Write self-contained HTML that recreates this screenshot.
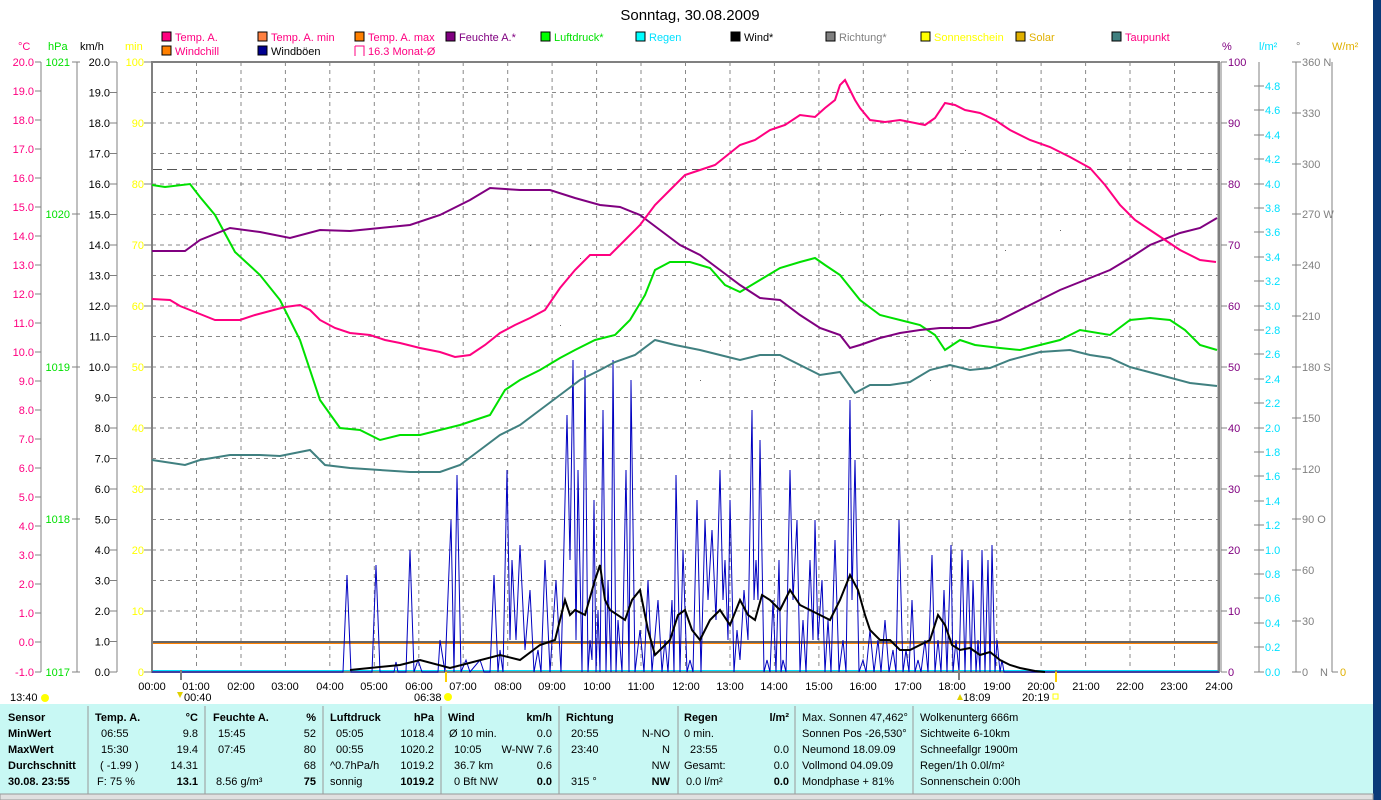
<!DOCTYPE html>
<html><head><meta charset="utf-8"><style>
html,body{margin:0;padding:0;background:#fff;overflow:hidden}
svg{display:block;font-family:"Liberation Sans",sans-serif}
</style></head><body>
<svg width="1381" height="800" viewBox="0 0 1381 800" xmlns="http://www.w3.org/2000/svg">
<rect x="0" y="0" width="1381" height="800" fill="#fff"/>
<rect x="1373" y="0" width="8" height="800" fill="#0a3a78"/>
<text x="690" y="20" font-size="15" text-anchor="middle" fill="#000">Sonntag, 30.08.2009</text>

<g font-size="11">
<rect x="162" y="32" width="9" height="9" fill="#ff0080" stroke="#000"/><text x="175" y="41" fill="#ff0080">Temp. A.</text>
<rect x="258" y="32" width="9" height="9" fill="#ff8040" stroke="#000"/><text x="271" y="41" fill="#ff0080">Temp. A. min</text>
<rect x="355" y="32" width="9" height="9" fill="#ff8000" stroke="#000"/><text x="368" y="41" fill="#ff0080">Temp. A. max</text>
<rect x="446" y="32" width="9" height="9" fill="#800080" stroke="#000"/><text x="459" y="41" fill="#800080">Feuchte A.*</text>
<rect x="541" y="32" width="9" height="9" fill="#00ff00" stroke="#000"/><text x="554" y="41" fill="#00e000">Luftdruck*</text>
<rect x="636" y="32" width="9" height="9" fill="#00ffff" stroke="#000"/><text x="649" y="41" fill="#00e0ff">Regen</text>
<rect x="731" y="32" width="9" height="9" fill="#000" stroke="#000"/><text x="744" y="41" fill="#000">Wind*</text>
<rect x="826" y="32" width="9" height="9" fill="#808080" stroke="#000"/><text x="839" y="41" fill="#808080">Richtung*</text>
<rect x="921" y="32" width="9" height="9" fill="#ffff00" stroke="#000"/><text x="934" y="41" fill="#ffff00">Sonnenschein</text>
<rect x="1016" y="32" width="9" height="9" fill="#e0b000" stroke="#000"/><text x="1029" y="41" fill="#e0b000">Solar</text>
<rect x="1112" y="32" width="9" height="9" fill="#408080" stroke="#000"/><text x="1125" y="41" fill="#ff0080">Taupunkt</text>
<rect x="162" y="46" width="9" height="9" fill="#ff8000" stroke="#000"/><text x="175" y="55" fill="#ff0080">Windchill</text>
<rect x="258" y="46" width="9" height="9" fill="#000090" stroke="#000"/><text x="271" y="55" fill="#000">Windböen</text>
<path d="M355 46h9v10M355 46v10" fill="none" stroke="#ff0080"/><text x="368" y="55" fill="#ff0080">16.3 Monat-Ø</text>
</g>

<g font-size="11">
<text x="18" y="50" fill="#ff0080">°C</text>
<text x="48" y="50" fill="#00e000">hPa</text>
<text x="80" y="50" fill="#000">km/h</text>
<text x="125" y="50" fill="#ffff00">min</text>
<text x="1222" y="50" fill="#800080">%</text>
<text x="1259" y="50" fill="#00e0ff">l/m²</text>
<text x="1296" y="50" fill="#808080">°</text>
<text x="1332" y="50" fill="#e0b000">W/m²</text>
</g>

<g stroke="#888" stroke-dasharray="4,4" stroke-width="1">
<path d="M152 92.5H1219M152 123H1219M152 153.5H1219M152 184H1219M152 214.5H1219M152 245H1219M152 275.5H1219M152 306H1219M152 336.5H1219M152 367H1219M152 397.5H1219M152 428H1219M152 458.5H1219M152 489H1219M152 519.5H1219M152 550H1219M152 580.5H1219M152 611H1219"/>
<path d="M196.5 62V672M241 62V672M285.4 62V672M329.8 62V672M374.3 62V672M418.8 62V672M463.2 62V672M507.7 62V672M552.1 62V672M596.6 62V672M641 62V672M685.5 62V672M730 62V672M774.4 62V672M818.9 62V672M863.3 62V672M907.8 62V672M952.2 62V672M996.7 62V672M1041.1 62V672M1085.6 62V672M1130 62V672M1174.5 62V672"/>
</g>
<path d="M152 169.5H1219" stroke="#555" stroke-dasharray="10,5"/>
<path d="M152 642H1219" stroke="#666" stroke-width="2"/>
<path d="M152 643.5H1219" stroke="#ff8000" stroke-width="1"/>
<path d="M152 671H1219" stroke="#00e0ff" stroke-width="2"/>
<rect x="152" y="62" width="1067" height="610" fill="none" stroke="#808080" stroke-width="2"/>
<path d="M1218 62V672M1221 62V672" stroke="#808080"/>

<g stroke="#808080" fill="none">
<path d="M41 62V672M77 62V672M117 62V672"/>
</g>
<g font-size="11" fill="#ff0080" text-anchor="end">
<text x="34" y="66">20.0</text><text x="34" y="95">19.0</text><text x="34" y="124">18.0</text><text x="34" y="153">17.0</text><text x="34" y="182">16.0</text><text x="34" y="211">15.0</text><text x="34" y="240">14.0</text><text x="34" y="269">13.0</text><text x="34" y="298">12.0</text><text x="34" y="327">11.0</text><text x="34" y="356">10.0</text><text x="34" y="385">9.0</text><text x="34" y="414">8.0</text><text x="34" y="443">7.0</text><text x="34" y="472">6.0</text><text x="34" y="501">5.0</text><text x="34" y="530">4.0</text><text x="34" y="559">3.0</text><text x="34" y="588">2.0</text><text x="34" y="617">1.0</text><text x="34" y="646">0.0</text><text x="34" y="676">-1.0</text>
</g>
<path d="M35 62h6M35 91h6M35 120h6M35 149h6M35 178h6M35 207h6M35 236h6M35 265h6M35 294h6M35 323h6M35 352h6M35 381h6M35 410h6M35 439h6M35 468h6M35 497h6M35 526h6M35 555h6M35 584h6M35 613h6M35 642h6M35 672h6" stroke="#808080"/>
<g font-size="11" fill="#00e000" text-anchor="end">
<text x="70" y="66">1021</text><text x="70" y="218">1020</text><text x="70" y="371">1019</text><text x="70" y="523">1018</text><text x="70" y="676">1017</text>
</g>
<path d="M72 62h8M72 214h8M72 367h8M72 519h8M72 672h8" stroke="#808080"/>
<g font-size="11" fill="#000" text-anchor="end">
<text x="110" y="66">20.0</text><text x="110" y="96.5">19.0</text><text x="110" y="127">18.0</text><text x="110" y="157.5">17.0</text><text x="110" y="188">16.0</text><text x="110" y="218.5">15.0</text><text x="110" y="249">14.0</text><text x="110" y="279.5">13.0</text><text x="110" y="310">12.0</text><text x="110" y="340.5">11.0</text><text x="110" y="371">10.0</text><text x="110" y="401.5">9.0</text><text x="110" y="432">8.0</text><text x="110" y="462.5">7.0</text><text x="110" y="493">6.0</text><text x="110" y="523.5">5.0</text><text x="110" y="554">4.0</text><text x="110" y="584.5">3.0</text><text x="110" y="615">2.0</text><text x="110" y="645.5">1.0</text><text x="110" y="676">0.0</text>
</g>
<path d="M110 62h7M110 92.5h7M110 123h7M110 153.5h7M110 184h7M110 214.5h7M110 245h7M110 275.5h7M110 306h7M110 336.5h7M110 367h7M110 397.5h7M110 428h7M110 458.5h7M110 489h7M110 519.5h7M110 550h7M110 580.5h7M110 611h7M110 641.5h7M110 672h7" stroke="#808080"/>
<g font-size="11" fill="#ffff00" text-anchor="end">
<text x="144" y="66">100</text><text x="144" y="127">90</text><text x="144" y="188">80</text><text x="144" y="249">70</text><text x="144" y="310">60</text><text x="144" y="371">50</text><text x="144" y="432">40</text><text x="144" y="493">30</text><text x="144" y="554">20</text><text x="144" y="615">10</text><text x="144" y="676">0</text>
</g>
<path d="M144 62h8M144 123h8M144 184h8M144 245h8M144 306h8M144 367h8M144 428h8M144 489h8M144 550h8M144 611h8M144 672h8" stroke="#808080"/>

<path d="M1221 62h6M1221 123h6M1221 184h6M1221 245h6M1221 306h6M1221 367h6M1221 428h6M1221 489h6M1221 550h6M1221 611h6M1221 672h6" stroke="#808080"/>
<g font-size="11" fill="#800080">
<text x="1228" y="66">100</text><text x="1228" y="127">90</text><text x="1228" y="188">80</text><text x="1228" y="249">70</text><text x="1228" y="310">60</text><text x="1228" y="371">50</text><text x="1228" y="432">40</text><text x="1228" y="493">30</text><text x="1228" y="554">20</text><text x="1228" y="615">10</text><text x="1228" y="676">0</text>
</g>
<path d="M1259 62V672M1296 62V672M1332 62V672" stroke="#808080"/>
<g stroke="#808080">
<path d="M1254 86h5M1254 110h5M1254 135h5M1254 159h5M1254 184h5M1254 208h5M1254 232h5M1254 257h5M1254 281h5M1254 306h5M1254 330h5M1254 354h5M1254 379h5M1254 403h5M1254 428h5M1254 452h5M1254 476h5M1254 501h5M1254 525h5M1254 550h5M1254 574h5M1254 598h5M1254 623h5M1254 647h5M1254 672h5"/>
<path d="M1259 86h5M1259 110h5M1259 135h5M1259 159h5M1259 184h5M1259 208h5M1259 232h5M1259 257h5M1259 281h5M1259 306h5M1259 330h5M1259 354h5M1259 379h5M1259 403h5M1259 428h5M1259 452h5M1259 476h5M1259 501h5M1259 525h5M1259 550h5M1259 574h5M1259 598h5M1259 623h5M1259 647h5M1259 672h5"/>
<path d="M1292 62h9M1292 113h9M1292 164h9M1292 214h9M1292 265h9M1292 316h9M1292 367h9M1292 418h9M1292 469h9M1292 519h9M1292 570h9M1292 621h9M1292 672h9M1332 672h6"/>
</g>
<g font-size="11" fill="#00e0ff">
<text x="1265" y="90">4.8</text><text x="1265" y="114">4.6</text><text x="1265" y="139">4.4</text><text x="1265" y="163">4.2</text><text x="1265" y="188">4.0</text><text x="1265" y="212">3.8</text><text x="1265" y="236">3.6</text><text x="1265" y="261">3.4</text><text x="1265" y="285">3.2</text><text x="1265" y="310">3.0</text><text x="1265" y="334">2.8</text><text x="1265" y="358">2.6</text><text x="1265" y="383">2.4</text><text x="1265" y="407">2.2</text><text x="1265" y="432">2.0</text><text x="1265" y="456">1.8</text><text x="1265" y="480">1.6</text><text x="1265" y="505">1.4</text><text x="1265" y="529">1.2</text><text x="1265" y="554">1.0</text><text x="1265" y="578">0.8</text><text x="1265" y="602">0.6</text><text x="1265" y="627">0.4</text><text x="1265" y="651">0.2</text><text x="1265" y="676">0.0</text>
</g>
<g font-size="11" fill="#808080">
<text x="1302" y="66">360 N</text><text x="1302" y="117">330</text><text x="1302" y="168">300</text><text x="1302" y="218">270 W</text><text x="1302" y="269">240</text><text x="1302" y="320">210</text><text x="1302" y="371">180 S</text><text x="1302" y="422">150</text><text x="1302" y="473">120</text><text x="1302" y="523">90  O</text><text x="1302" y="574">60</text><text x="1302" y="625">30</text><text x="1302" y="676">0</text><text x="1320" y="676">N</text>
</g>
<text x="1340" y="676" font-size="11" fill="#e0b000">0</text>

<g fill="#666">
<rect x="397" y="220" width="1" height="1"/><rect x="455" y="275" width="1" height="1"/><rect x="530" y="245" width="1" height="1"/><rect x="560" y="325" width="1" height="1"/><rect x="580" y="258" width="1" height="1"/><rect x="620" y="330" width="1" height="1"/><rect x="700" y="380" width="1" height="1"/><rect x="720" y="340" width="1" height="1"/><rect x="775" y="380" width="1" height="1"/><rect x="810" y="360" width="1" height="1"/><rect x="840" y="212" width="1" height="1"/><rect x="880" y="215" width="1" height="1"/><rect x="905" y="340" width="1" height="1"/><rect x="930" y="380" width="1" height="1"/><rect x="965" y="150" width="1" height="1"/><rect x="1005" y="250" width="1" height="1"/><rect x="1060" y="230" width="1" height="1"/><rect x="1170" y="310" width="1" height="1"/>
</g>

<polyline fill="none" stroke="#0000c0" stroke-width="1" points="152,672 343,672 347,575 351,672 372,672 376,565 380,672 394,672 396,662 398,672 406,672 410,550 414,672 418,660 422,672 438,672 440,640 445,672 451,520 454,672 457,475 461,672 466,660 470,672 480,660 484,672 490,672 494,575 498,672 500,650 503,672 507,470 510,640 512,560 516,640 520,545 525,650 530,590 534,672 538,650 541,672 545,560 550,672 556,580 561,672 567,415 570,560 573,360 576,640 578,470 582,672 585,370 588,672 590,640 592,660 594,500 596,672 598,610 600,672 603,410 606,672 608,580 611,672 613,360 616,672 618,620 622,672 626,470 629,672 631,380 635,672 640,630 644,672 648,580 652,672 658,600 662,672 665,640 668,672 672,600 674,672 676,475 680,672 683,550 687,672 690,660 693,672 697,500 701,672 705,520 708,600 712,530 716,620 720,470 723,600 725,560 728,640 730,500 734,672 737,630 740,660 744,590 748,640 752,410 754,600 756,560 758,600 760,440 764,672 767,660 770,672 773,600 776,672 779,560 781,672 783,660 786,672 790,470 793,600 797,520 800,672 803,620 806,672 810,560 813,640 815,520 818,640 822,580 825,672 828,620 831,672 835,540 839,672 843,640 846,672 850,400 852,600 855,460 859,672 863,660 866,672 870,630 874,672 878,640 881,672 885,620 889,672 893,650 896,672 899,520 903,672 906,650 909,672 912,600 915,672 918,660 921,672 925,640 928,672 932,555 935,672 938,640 941,672 944,590 947,672 951,545 953,672 956,640 959,672 962,550 965,672 968,560 971,672 973,580 976,672 978,640 980,672 982,550 985,672 988,560 990,672 992,545 995,672 997,640 1000,672 1002,660 1004,672 1219,672"/>

<polyline fill="none" stroke="#000" stroke-width="2" points="350,670 400,665 420,660 450,668 500,655 520,660 540,645 555,640 565,600 570,615 575,610 585,615 595,580 600,565 605,600 610,610 625,620 632,600 640,590 648,630 655,655 670,640 678,615 685,610 692,630 700,640 710,620 720,610 730,625 740,600 748,615 755,620 762,595 770,600 780,610 790,590 800,605 810,610 820,615 830,620 840,600 850,575 858,590 865,615 870,630 880,640 890,640 900,650 910,650 920,645 930,640 938,615 945,625 952,645 960,650 970,648 980,655 990,652 1000,660 1010,665 1020,668 1035,671 1045,672"/>

<polyline fill="none" stroke="#408080" stroke-width="2" points="152,460 185,465 200,460 230,455 260,455 280,456 310,450 325,465 350,468 380,470 410,472 440,472 460,465 480,450 500,435 520,425 540,410 560,395 580,380 600,370 615,362 635,355 655,340 675,345 700,350 720,355 740,360 760,355 780,355 800,365 820,375 840,372 855,393 870,385 890,385 910,382 930,370 950,365 970,370 990,368 1010,360 1040,352 1070,350 1090,355 1110,358 1130,367 1160,375 1190,383 1217,386"/>

<polyline fill="none" stroke="#00e000" stroke-width="2" points="152,185 165,187 190,184 200,197 215,215 235,252 260,275 280,300 300,340 320,400 340,428 360,430 380,440 400,435 420,435 440,430 460,425 490,415 505,390 520,380 540,370 560,358 575,350 595,340 615,335 630,320 645,295 655,270 670,262 690,262 710,268 725,285 740,292 760,280 780,268 800,262 815,258 825,265 840,275 860,300 880,315 900,320 920,325 935,335 945,350 960,340 975,345 1000,348 1020,350 1040,345 1060,340 1080,330 1110,335 1130,320 1150,318 1170,320 1185,330 1200,345 1217,350"/>

<polyline fill="none" stroke="#800080" stroke-width="2" points="152,251 185,251 200,240 230,228 260,232 290,238 320,230 350,231 380,228 410,225 440,215 470,200 490,188 520,190 550,190 575,198 600,205 620,207 640,215 660,230 680,245 700,255 720,270 740,285 760,298 780,300 800,315 820,328 840,335 850,348 860,345 880,338 900,333 920,330 940,328 970,328 1000,320 1030,305 1060,290 1090,278 1110,270 1130,258 1150,245 1180,233 1200,228 1217,218"/>

<polyline fill="none" stroke="#ff0080" stroke-width="2" points="152,299 170,300 180,306 195,312 215,320 240,320 255,315 270,311 285,307 300,305 310,310 320,320 335,328 350,333 370,335 385,340 400,343 420,348 440,352 455,357 470,355 485,345 500,333 515,325 530,318 545,310 560,288 575,270 590,255 610,255 625,240 640,225 655,205 670,190 685,175 700,170 715,165 730,153 740,145 755,140 770,130 785,125 800,115 815,117 825,108 835,100 840,85 845,80 850,90 855,100 860,108 870,120 885,122 900,120 915,123 925,125 935,118 945,103 955,105 965,110 980,113 995,120 1010,130 1030,140 1050,147 1070,157 1090,168 1105,185 1120,205 1135,220 1150,230 1165,240 1180,250 1200,260 1216,262"/>

<g font-size="11" fill="#000" text-anchor="middle">
<text x="152" y="690">00:00</text><text x="196" y="690">01:00</text><text x="241" y="690">02:00</text><text x="285" y="690">03:00</text><text x="330" y="690">04:00</text><text x="374" y="690">05:00</text><text x="419" y="690">06:00</text><text x="463" y="690">07:00</text><text x="508" y="690">08:00</text><text x="552" y="690">09:00</text><text x="597" y="690">10:00</text><text x="641" y="690">11:00</text><text x="686" y="690">12:00</text><text x="730" y="690">13:00</text><text x="774" y="690">14:00</text><text x="819" y="690">15:00</text><text x="863" y="690">16:00</text><text x="908" y="690">17:00</text><text x="952" y="690">18:00</text><text x="997" y="690">19:00</text><text x="1041" y="690">20:00</text><text x="1086" y="690">21:00</text><text x="1130" y="690">22:00</text><text x="1174" y="690">23:00</text><text x="1219" y="690">24:00</text>
</g>
<path d="M181 670V680M446 670V680M959 670V680M1056 670V680" stroke="#808080" stroke-width="2"/>
<path d="M446 672V682M1056 672V682" stroke="#ffd000" stroke-width="2"/>
<g font-size="11" fill="#000">
<text x="10" y="701">13:40</text><circle cx="45" cy="698" r="4" fill="#ffff00"/>
<text x="184" y="701">00:40</text><path d="M177 692l3 6 3-6z" fill="#e0d000"/>
<text x="414" y="701">06:38</text><circle cx="448" cy="697" r="4" fill="#ffff00"/>
<text x="963" y="701">18:09</text><path d="M957 700l3-6 3 6z" fill="#e0d000"/>
<text x="1022" y="701">20:19</text><rect x="1053" y="694" width="5" height="5" fill="none" stroke="#ffff00"/>
</g>

<rect x="0" y="704" width="1373" height="90" fill="#c8f8f4"/>
<rect x="0" y="794" width="1373" height="6" fill="#e0e0e0" stroke="#999"/>
<path d="M88 706V794M205 706V794M323 706V794M441 706V794M559 706V794M678 706V794M795 706V794M913 706V794" stroke="#999"/>
<g font-size="11" fill="#000">
<g font-weight="bold">
<text x="8" y="721">Sensor</text><text x="8" y="737">MinWert</text><text x="8" y="753">MaxWert</text><text x="8" y="769">Durchschnitt</text><text x="8" y="785">30.08. 23:55</text>
<text x="95" y="721">Temp. A.</text><text x="198" y="721" text-anchor="end">°C</text>
<text x="213" y="721">Feuchte A.</text><text x="316" y="721" text-anchor="end">%</text>
<text x="330" y="721">Luftdruck</text><text x="434" y="721" text-anchor="end">hPa</text>
<text x="448" y="721">Wind</text><text x="552" y="721" text-anchor="end">km/h</text>
<text x="566" y="721">Richtung</text>
<text x="684" y="721">Regen</text><text x="789" y="721" text-anchor="end">l/m²</text>
<text x="198" y="785" text-anchor="end">13.1</text><text x="316" y="785" text-anchor="end">75</text><text x="434" y="785" text-anchor="end">1019.2</text><text x="552" y="785" text-anchor="end">0.0</text><text x="670" y="785" text-anchor="end">NW</text><text x="789" y="785" text-anchor="end">0.0</text>
</g>
<text x="101" y="737">06:55</text><text x="198" y="737" text-anchor="end">9.8</text>
<text x="101" y="753">15:30</text><text x="198" y="753" text-anchor="end">19.4</text>
<text x="100" y="769">( -1.99 )</text><text x="198" y="769" text-anchor="end">14.31</text>
<text x="97" y="785">F: 75 %</text>
<text x="218" y="737">15:45</text><text x="316" y="737" text-anchor="end">52</text>
<text x="218" y="753">07:45</text><text x="316" y="753" text-anchor="end">80</text>
<text x="316" y="769" text-anchor="end">68</text>
<text x="216" y="785">8.56 g/m³</text>
<text x="336" y="737">05:05</text><text x="434" y="737" text-anchor="end">1018.4</text>
<text x="336" y="753">00:55</text><text x="434" y="753" text-anchor="end">1020.2</text>
<text x="330" y="769">^0.7hPa/h</text><text x="434" y="769" text-anchor="end">1019.2</text>
<text x="330" y="785">sonnig</text>
<text x="449" y="737">Ø 10 min.</text><text x="552" y="737" text-anchor="end">0.0</text>
<text x="454" y="753">10:05</text><text x="552" y="753" text-anchor="end">W-NW 7.6</text>
<text x="454" y="769">36.7 km</text><text x="552" y="769" text-anchor="end">0.6</text>
<text x="454" y="785">0 Bft NW</text>
<text x="571" y="737">20:55</text><text x="670" y="737" text-anchor="end">N-NO</text>
<text x="571" y="753">23:40</text><text x="670" y="753" text-anchor="end">N</text>
<text x="670" y="769" text-anchor="end">NW</text>
<text x="571" y="785">315 °</text>
<text x="684" y="737">0 min.</text>
<text x="690" y="753">23:55</text><text x="789" y="753" text-anchor="end">0.0</text>
<text x="684" y="769">Gesamt:</text><text x="789" y="769" text-anchor="end">0.0</text>
<text x="686" y="785">0.0 l/m²</text>
<text x="802" y="721">Max. Sonnen 47,462°</text>
<text x="802" y="737">Sonnen Pos  -26,530°</text>
<text x="802" y="753">Neumond    18.09.09</text>
<text x="802" y="769">Vollmond    04.09.09</text>
<text x="802" y="785">Mondphase       + 81%</text>
<text x="920" y="721">Wolkenunterg   666m</text>
<text x="920" y="737">Sichtweite      6-10km</text>
<text x="920" y="753">Schneefallgr   1900m</text>
<text x="920" y="769">Regen/1h      0.0l/m²</text>
<text x="920" y="785">Sonnenschein  0:00h</text>
</g>
</svg>
</body></html>
